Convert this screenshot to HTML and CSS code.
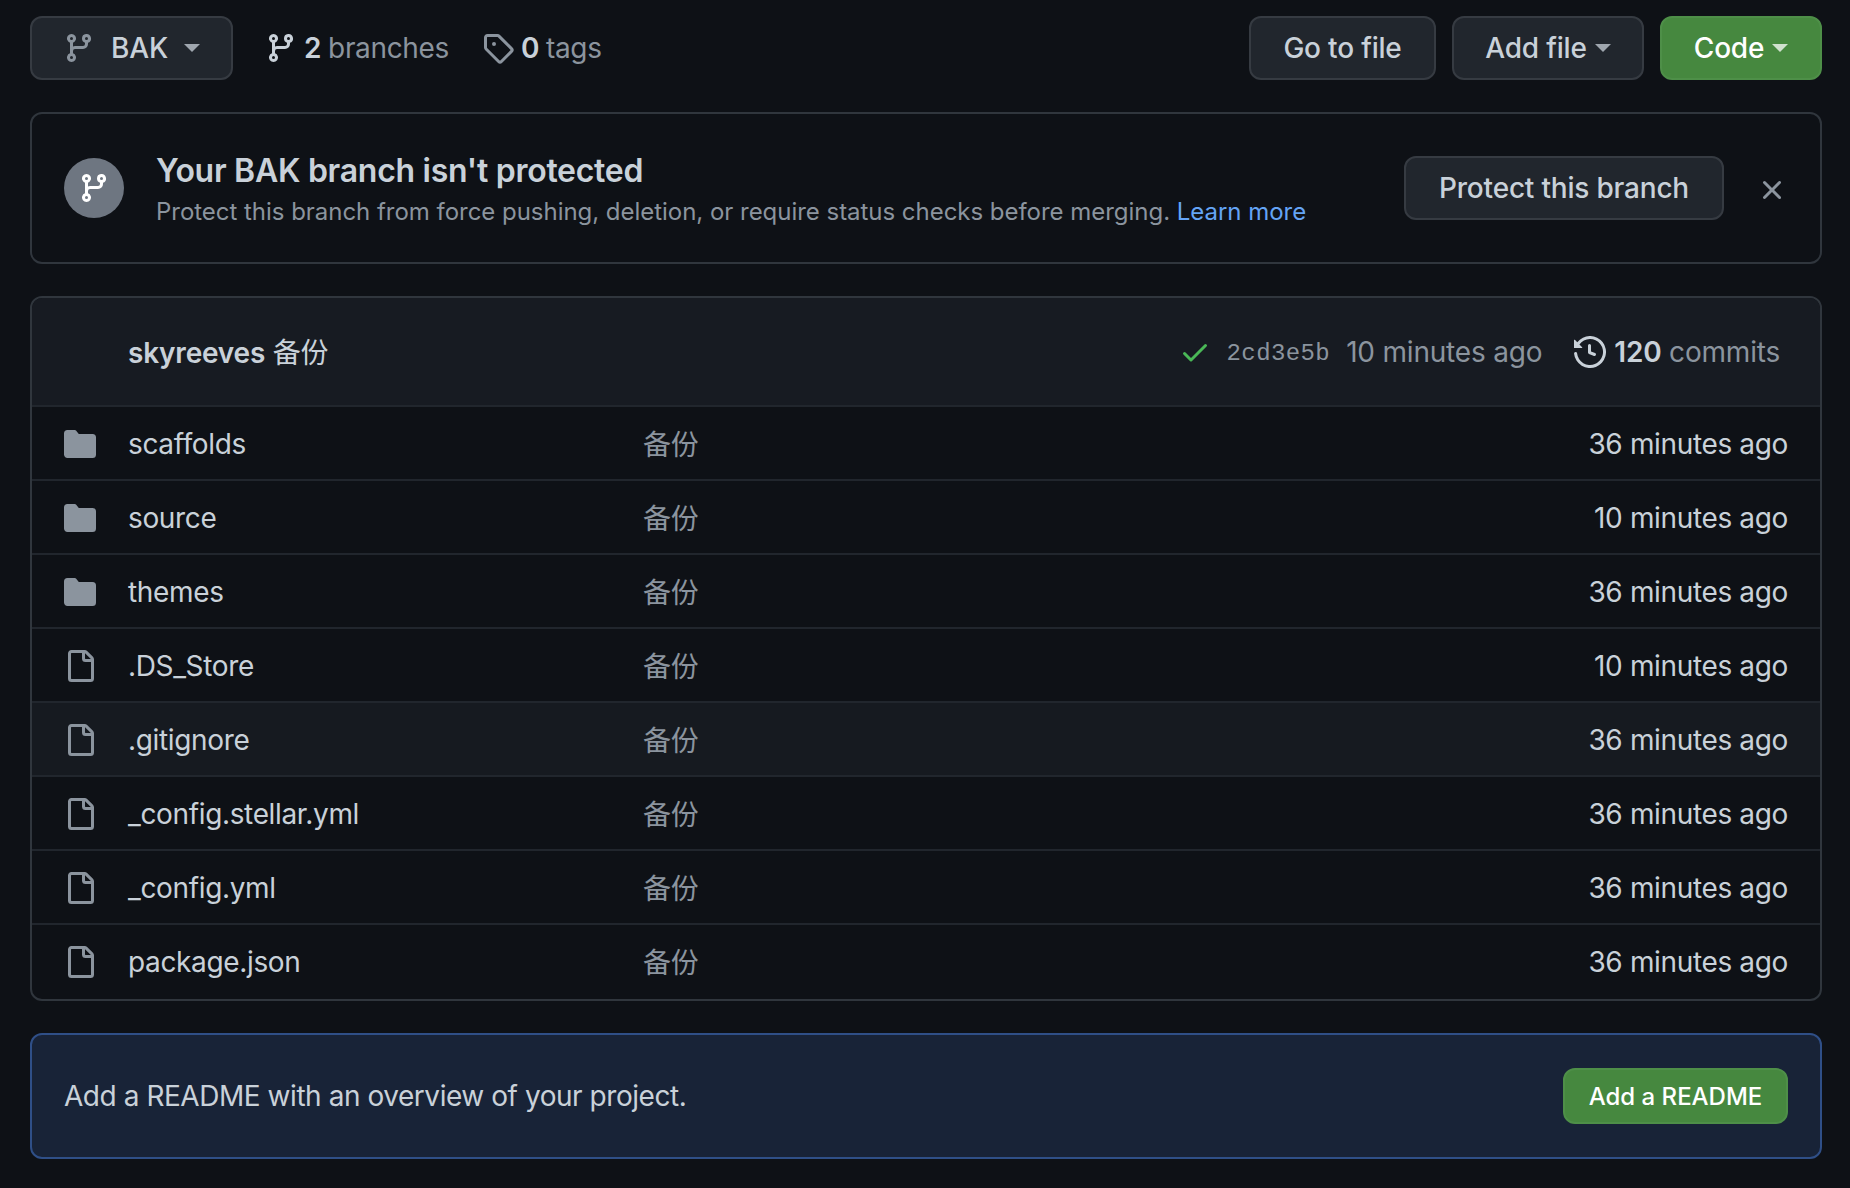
FILE: index.html
```html
<!DOCTYPE html>
<html>
<head>
<meta charset="UTF-8">
<title>BAK</title>
<link rel="stylesheet" href="styles.css">
</head>
<body>

<svg class="defs" width="0" height="0">
	<symbol id="i-branch" viewBox="0 0 16 16"><path d="M9.5 3.25a2.25 2.25 0 1 1 3 2.122V6A2.5 2.5 0 0 1 10 8.5H6a1 1 0 0 0-1 1v1.128a2.251 2.251 0 1 1-1.5 0V5.372a2.25 2.25 0 1 1 1.5 0v1.836A2.493 2.493 0 0 1 6 7h4a1 1 0 0 0 1-1v-.628A2.25 2.25 0 0 1 9.5 3.25Zm-6 0a.75.75 0 1 0 1.5 0 .75.75 0 0 0-1.5 0Zm8.25-.75a.75.75 0 1 0 0 1.5.75.75 0 0 0 0-1.5ZM4.25 12a.75.75 0 1 0 0 1.5.75.75 0 0 0 0-1.5Z"/></symbol>
	<symbol id="i-tag" viewBox="0 0 16 16"><path d="M1 7.775V2.75C1 1.784 1.784 1 2.75 1h5.025c.464 0 .91.184 1.238.513l6.25 6.25a1.75 1.75 0 0 1 0 2.474l-5.026 5.026a1.75 1.75 0 0 1-2.474 0l-6.25-6.25A1.752 1.752 0 0 1 1 7.775Zm1.5 0c0 .066.026.13.073.177l6.25 6.25a.25.25 0 0 0 .354 0l5.025-5.025a.25.25 0 0 0 0-.354l-6.25-6.25a.25.25 0 0 0-.177-.073H2.75a.25.25 0 0 0-.25.25ZM6 5a1 1 0 1 1 0 2 1 1 0 0 1 0-2Z"/></symbol>
	<symbol id="i-history" viewBox="0 0 16 16"><path d="m.427 1.927 1.215 1.215a8.002 8.002 0 1 1-1.6 5.685.75.75 0 1 1 1.493-.154 6.5 6.5 0 1 0 1.18-4.458l1.358 1.358A.25.25 0 0 1 3.896 6H.25A.25.25 0 0 1 0 5.75V2.104a.25.25 0 0 1 .427-.177ZM7.75 4a.75.75 0 0 1 .75.75v2.992l2.028.812a.75.75 0 0 1-.557 1.392l-2.5-1A.751.751 0 0 1 7 8.25v-3.5A.75.75 0 0 1 7.75 4Z"/></symbol>
	<symbol id="i-file" viewBox="0 0 16 16"><path d="M2 1.75C2 .784 2.784 0 3.75 0h6.586c.464 0 .909.184 1.237.513l2.914 2.914c.329.328.513.773.513 1.237v9.586A1.75 1.75 0 0 1 13.25 16h-9.5A1.75 1.75 0 0 1 2 14.25Zm1.75-.25a.25.25 0 0 0-.25.25v12.5c0 .138.112.25.25.25h9.5a.25.25 0 0 0 .25-.25V6h-2.75A1.75 1.75 0 0 1 9 4.25V1.5Zm6.75.062V4.25c0 .138.112.25.25.25h2.688l-.011-.013-2.914-2.914-.013-.011Z"/></symbol>
	<symbol id="i-folder" viewBox="0 0 16 16"><path d="M1.75 1A1.75 1.75 0 0 0 0 2.75v10.5C0 14.216.784 15 1.75 15h12.5A1.75 1.75 0 0 0 16 13.25v-8.5A1.75 1.75 0 0 0 14.25 3H7.5a.25.25 0 0 1-.2-.1l-.9-1.2C6.07 1.26 5.55 1 5 1H1.75Z"/></symbol>
	<symbol id="i-check" viewBox="0 0 16 16"><path d="M13.78 4.22a.75.75 0 0 1 0 1.06l-7.25 7.25a.75.75 0 0 1-1.06 0L2.22 9.28a.751.751 0 0 1 .018-1.042.751.751 0 0 1 1.042-.018L6 10.94l6.72-6.72a.75.75 0 0 1 1.06 0Z"/></symbol>
	<symbol id="i-x" viewBox="0 0 16 16"><path d="M3.72 3.72a.75.75 0 0 1 1.06 0L8 6.94l3.22-3.22a.749.749 0 0 1 1.275.326.749.749 0 0 1-.215.734L9.06 8l3.22 3.22a.749.749 0 0 1-.326 1.275.749.749 0 0 1-.734-.215L8 9.06l-3.22 3.22a.751.751 0 0 1-1.042-.018.751.751 0 0 1-.018-1.042L6.94 8 3.72 4.78a.75.75 0 0 1 0-1.06Z"/></symbol>
</svg>

<!-- top toolbar -->
<div class="toolbar">
	<span class="btn branchBtn">
		<svg class="icon muted"><use href="#i-branch"/></svg>
		<span class="branchName">BAK</span>
		<span class="caret"></span>
	</span>
	<span class="stat statBranches">
		<svg class="icon"><use href="#i-branch"/></svg>
		<b>2</b> <span class="muted">branches</span>
	</span>
	<span class="stat statTags">
		<svg class="icon muted"><use href="#i-tag"/></svg>
		<b>0</b> <span class="muted">tags</span>
	</span>
	<span class="spacer"></span>
	<span class="btn goBtn">Go to file</span>
	<span class="btn addBtn">Add file<span class="caret"></span></span>
	<span class="btn primary codeBtn">Code<span class="caret"></span></span>
</div>

<!-- protect banner -->
<div class="protect">
	<span class="protectIcon"><svg class="icon"><use href="#i-branch"/></svg></span>
	<div class="protectText">
		<h3>Your BAK branch isn't protected</h3>
		<p>Protect this branch from force pushing, deletion, or require status checks before merging. <a>Learn more</a></p>
	</div>
	<span class="btn">Protect this branch</span>
	<svg class="icon closeIcon"><use href="#i-x"/></svg>
</div>

<!-- file list -->
<div class="files">
	<div class="commitBar">
		<span class="commitMsg"><b>skyreeves</b> 备份</span>
		<svg class="icon checkIcon"><use href="#i-check"/></svg>
		<span class="sha">2cd3e5b</span>
		<span class="commitAge">10 minutes ago</span>
		<svg class="icon historyIcon"><use href="#i-history"/></svg>
		<span class="commitCount"><b>120</b> <span class="muted">commits</span></span>
	</div>
	<div class="row"><svg class="icon folder"><use href="#i-folder"/></svg><span class="name">scaffolds</span><span class="msg">备份</span><span class="age">36 minutes ago</span></div>
	<div class="row"><svg class="icon folder"><use href="#i-folder"/></svg><span class="name">source</span><span class="msg">备份</span><span class="age">10 minutes ago</span></div>
	<div class="row"><svg class="icon folder"><use href="#i-folder"/></svg><span class="name">themes</span><span class="msg">备份</span><span class="age">36 minutes ago</span></div>
	<div class="row"><svg class="icon file"><use href="#i-file"/></svg><span class="name">.DS_Store</span><span class="msg">备份</span><span class="age">10 minutes ago</span></div>
	<div class="row hover"><svg class="icon file"><use href="#i-file"/></svg><span class="name">.gitignore</span><span class="msg">备份</span><span class="age">36 minutes ago</span></div>
	<div class="row"><svg class="icon file"><use href="#i-file"/></svg><span class="name">_config.stellar.yml</span><span class="msg">备份</span><span class="age">36 minutes ago</span></div>
	<div class="row"><svg class="icon file"><use href="#i-file"/></svg><span class="name">_config.yml</span><span class="msg">备份</span><span class="age">36 minutes ago</span></div>
	<div class="row"><svg class="icon file"><use href="#i-file"/></svg><span class="name">package.json</span><span class="msg">备份</span><span class="age">36 minutes ago</span></div>
</div>

<!-- readme prompt -->
<div class="readme">
	<span class="readmeText">Add a README with an overview of your project.</span>
	<span class="btn primary small">Add a README</span>
</div>

</body>
</html>
```

FILE: styles.css
```css
/* base */
html, body {
	margin: 0;
	padding: 0;
}
body {
	height: 1188px;
	box-sizing: border-box;
	padding: 16px 28px 0 30px;
	overflow: hidden;
	background: #0e1116;
	color: #c9d1d9;
	font-family: "Inter", "Noto Sans CJK SC", sans-serif;
	font-size: 28px;
	letter-spacing: -0.2px;
}
b { font-weight: 600; }
.defs { position: absolute; }
.icon {
	width: 32px;
	height: 32px;
	flex: none;
	fill: currentColor;
}
.muted { color: #8b949e; }

/* buttons */
.btn {
	display: flex;
	align-items: center;
	justify-content: center;
	box-sizing: border-box;
	height: 64px;
	border: 2px solid #363b42;
	border-radius: 12px;
	background: #21262d;
	color: #c9d1d9;
	font-weight: 500;
	white-space: nowrap;
}
.btn.primary {
	background: #46883f;
	border-color: #4e8f48;
	color: #fff;
}
.btn.small {
	width: 225px;
	height: 56px;
	font-size: 24px;
	letter-spacing: 0;
}
.caret {
	width: 0;
	height: 0;
	margin-left: 8px;
	border-top: 8px solid currentColor;
	border-left: 8px solid transparent;
	border-right: 8px solid transparent;
	opacity: 0.75;
}

/* toolbar */
.toolbar {
	display: flex;
	align-items: center;
	height: 64px;
}
.branchBtn {
	width: 203px;
	margin-right: 32px;
}
.branchName { margin-left: 16px; }
.branchBtn .caret { margin-left: 16px; }
.stat {
	display: flex;
	align-items: center;
	gap: 7px;
	white-space: nowrap;
	letter-spacing: -0.35px;
}
.statBranches { margin-right: 33px; }
.spacer { flex: 1; }
.goBtn { width: 187px; margin-right: 16px; }
.addBtn { width: 192px; margin-right: 16px; }
.codeBtn { width: 162px; }

/* banner */
.protect {
	display: flex;
	align-items: center;
	box-sizing: border-box;
	height: 152px;
	margin-top: 32px;
	padding: 0 32px;
	border: 2px solid #30363d;
	border-radius: 12px;
}
.protectIcon {
	display: flex;
	align-items: center;
	justify-content: center;
	width: 60px;
	height: 60px;
	flex: none;
	border-radius: 50%;
	background: #6e7681;
	color: #fff;
}
.protectText {
	flex: 1;
	margin-left: 32px;
	padding-top: 3px;
}
.protectText h3 {
	margin: 0;
	font-size: 32px;
	line-height: 40px;
	font-weight: 600;
	letter-spacing: -0.28px;
}
.protectText p {
	margin: 5px 0 0;
	color: #8b949e;
	font-size: 24px;
	line-height: 32px;
	letter-spacing: -0.03px;
}
.protectText a { color: #64a4f5; }
.protect .btn { width: 320px; }
.closeIcon {
	margin: 4px 0 0 32px;
	color: #8b949e;
}

/* file list */
.files {
	box-sizing: border-box;
	height: 705px;
	margin-top: 32px;
	border: 2px solid #30363d;
	border-radius: 12px;
	overflow: hidden;
}
.commitBar {
	display: flex;
	align-items: center;
	height: 107px;
	padding: 0 40px 0 96px;
	background: #171b22;
}
.commitMsg {
	flex: 1;
	margin-bottom: 2px;
}
.checkIcon {
	margin-right: 16px;
	color: #4ab857;
}
.sha {
	margin: 4px 16px 0 0;
	color: #8b949e;
	font-family: "Liberation Mono", monospace;
	font-size: 24px;
	letter-spacing: 0.4px;
}
.commitAge {
	margin-right: 32px;
	color: #8b949e;
}
.historyIcon {
	margin-right: 8px;
	color: #c9d1d9;
}
.row {
	display: flex;
	align-items: center;
	box-sizing: border-box;
	height: 74px;
	padding: 2px 32px 0 32px;
	border-top: 2px solid #21262d;
	letter-spacing: -0.35px;
}
.row.hover { background: #161a20; }
.row .icon { margin-right: 32px; color: #8b949e; }
.row .name { width: 515px; }
.row .msg {
	flex: 1;
	margin-bottom: 2px;
	color: #8b949e;
}

/* readme */
.readme {
	display: flex;
	align-items: center;
	justify-content: space-between;
	box-sizing: border-box;
	height: 126px;
	margin-top: 32px;
	padding: 0 32px;
	border: 2px solid #2f4f87;
	border-radius: 12px;
	background: #182337;
}
.readmeText { letter-spacing: -0.45px; }
```
